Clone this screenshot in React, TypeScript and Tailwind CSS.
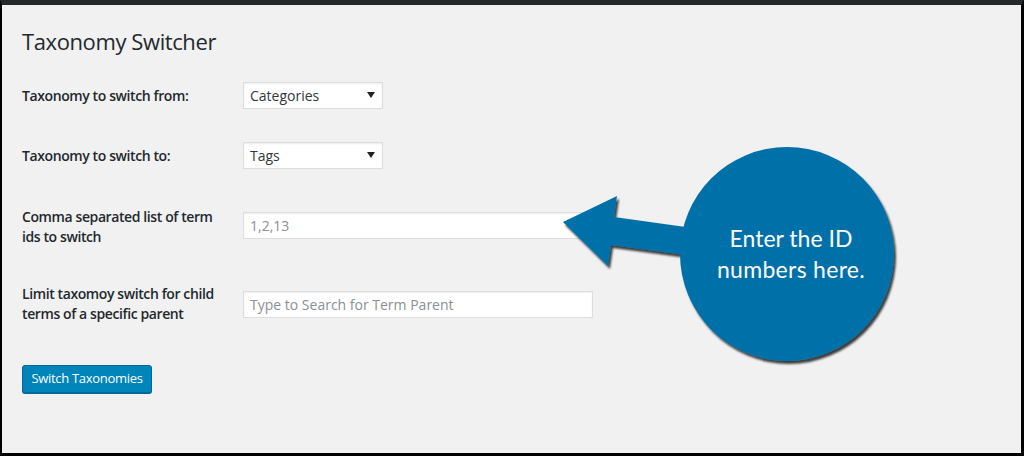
import React from "react";

const font = { fontFamily: '"Open Sans", "Noto Sans", sans-serif' };

function Select({ value }: { value: string }) {
  return (
    <div className="flex h-[27px] w-[140px] items-center justify-between border border-[#dddddd] bg-white pl-[6px] pr-[7px] text-[14px] text-[#32373c] shadow-[inset_0_1px_2px_rgba(0,0,0,0.07)]">
      <span>{value}</span>
      <svg width="8" height="6" viewBox="0 0 8 6">
        <polygon points="0,0 8,0 4,6" fill="#222" />
      </svg>
    </div>
  );
}

function TextInput({ text, width }: { text: string; width: string }) {
  return (
    <div
      className={`flex h-[27px] items-center border border-[#dddddd] bg-white pl-[6px] text-[14px] text-[#8a8f94] shadow-[inset_0_1px_2px_rgba(0,0,0,0.07)] ${width}`}
    >
      {text}
    </div>
  );
}

export default function App() {
  return (
    <div
      className="relative h-[456px] w-[1024px] overflow-hidden border-t-[5px] border-r-[3px] border-b-[3px] border-l-[2px] border-t-[#23282d] border-r-black border-b-black border-l-black bg-[#f1f1f1] text-[#23282d]"
      style={font}
    >
      <div className="pl-[20px] pt-[22px]">
        <h1 className="h-[29px] text-[22px] leading-[29px] font-normal text-[#23282d] tracking-[-0.4px]">
          Taxonomy Switcher
        </h1>

        <div className="mt-[20px] flex h-[38px] items-center">
          <div className="w-[221px] text-[14px] font-semibold tracking-[-0.4px]">Taxonomy to switch from:</div>
          <Select value="Categories" />
        </div>

        <div className="mt-[22px] flex h-[38px] items-center">
          <div className="w-[221px] text-[14px] font-semibold tracking-[-0.4px]">Taxonomy to switch to:</div>
          <Select value="Tags" />
        </div>

        <div className="mt-[31px] flex h-[40px] items-center">
          <div className="w-[221px] pr-[20px] pt-[4px] text-[14px] leading-[20px] font-semibold tracking-[-0.4px]">
            Comma separated list of term ids to switch
          </div>
          <TextInput text="1,2,13" width="w-[350px]" />
        </div>

        <div className="mt-[39px] flex h-[40px] items-center">
          <div className="w-[221px] pr-[20px] text-[14px] leading-[20px] font-semibold tracking-[-0.4px]">
            Limit taxomoy switch for child terms of a specific parent
          </div>
          <TextInput text="Type to Search for Term Parent" width="w-[350px]" />
        </div>

        <div className="mt-[41px]">
          <button className="flex h-[28px] w-[130px] items-center justify-center rounded-[3px] border border-[#006799] bg-[#0085ba] text-[13px] tracking-[-0.3px] text-white shadow-[0_1px_0_#006799]">
            Switch Taxonomies
          </button>
        </div>
      </div>

      <svg
        className="pointer-events-none absolute left-0 top-0"
        width="1024"
        height="456"
        viewBox="2 5 1024 456"
      >
        <defs>
          <filter id="sh" x="-20%" y="-20%" width="150%" height="150%">
            <feDropShadow dx="2" dy="3" stdDeviation="1" floodColor="#000" floodOpacity="0.75" />
          </filter>
        </defs>
        <g filter="url(#sh)" fill="#0270a8">
          <polygon points="563,222 617,196 614,217 700,229 700,257 611,245 608,266" />
          <circle cx="787" cy="254" r="107" />
        </g>
        <text
          x="791"
          y="247"
          textAnchor="middle"
          fill="#ffffff"
          fontSize="23"
          style={{ fontFamily: 'Lato, "Open Sans", sans-serif' }}
        >
          Enter the ID
        </text>
        <text
          x="791"
          y="278"
          textAnchor="middle"
          fill="#ffffff"
          fontSize="23"
          letterSpacing="0.3"
          style={{ fontFamily: 'Lato, "Open Sans", sans-serif' }}
        >
          numbers here.
        </text>
      </svg>
    </div>
  );
}
